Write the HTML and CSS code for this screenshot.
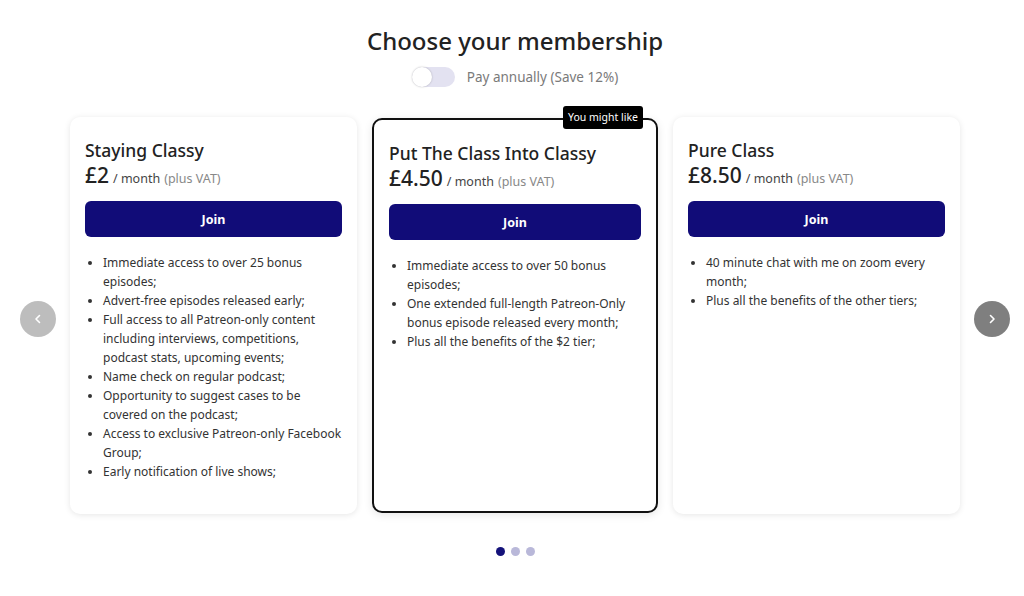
FILE: index.html
```html
<!DOCTYPE html>
<html lang="en">
<head>
<meta charset="utf-8">
<title>Choose your membership</title>
<link rel="stylesheet" href="styles.css">
</head>
<body>
<main class="page">
  <h1 class="title">Choose your membership</h1>
  <div class="toggle-row">
    <span class="switch"><span class="knob"></span></span>
    <span class="toggle-label">Pay annually (Save 12%)</span>
  </div>

  <div class="carousel">
    <button class="arrow arrow-prev" aria-label="Previous">
      <svg width="12" height="12" viewBox="0 0 12 12"><path d="M7.5 2.5 L4 6 L7.5 9.5" fill="none" stroke="#fff" stroke-width="1.6" stroke-linecap="round" stroke-linejoin="round"/></svg>
    </button>

    <div class="track">
      <section class="card">
        <h2 class="card-title">Staying Classy</h2>
        <div class="price"><span class="amount">£2</span><span class="per">/ month</span><span class="vat">(plus VAT)</span></div>
        <button class="join">Join</button>
        <ul class="perks">
          <li>Immediate access to over 25 bonus episodes;</li>
          <li>Advert-free episodes released early;</li>
          <li>Full access to all Patreon-only content including interviews, competitions, podcast stats, upcoming events;</li>
          <li>Name check on regular podcast;</li>
          <li>Opportunity to suggest cases to be covered on the podcast;</li>
          <li>Access to exclusive Patreon-only Facebook Group;</li>
          <li>Early notification of live shows;</li>
        </ul>
      </section>

      <section class="card card-featured">
        <span class="badge">You might like</span>
        <h2 class="card-title">Put The Class Into Classy</h2>
        <div class="price"><span class="amount">£4.50</span><span class="per">/ month</span><span class="vat">(plus VAT)</span></div>
        <button class="join">Join</button>
        <ul class="perks">
          <li>Immediate access to over 50 bonus episodes;</li>
          <li>One extended full-length Patreon-Only bonus episode released every month;</li>
          <li>Plus all the benefits of the $2 tier;</li>
        </ul>
      </section>

      <section class="card">
        <h2 class="card-title">Pure Class</h2>
        <div class="price"><span class="amount">£8.50</span><span class="per">/ month</span><span class="vat">(plus VAT)</span></div>
        <button class="join">Join</button>
        <ul class="perks">
          <li>40 minute chat with me on zoom every month;</li>
          <li>Plus all the benefits of the other tiers;</li>
        </ul>
      </section>
    </div>

    <button class="arrow arrow-next" aria-label="Next">
      <svg width="12" height="12" viewBox="0 0 12 12"><path d="M4.5 2.5 L8 6 L4.5 9.5" fill="none" stroke="#fff" stroke-width="1.6" stroke-linecap="round" stroke-linejoin="round"/></svg>
    </button>
  </div>

  <div class="dots">
    <span class="dot dot-active"></span>
    <span class="dot"></span>
    <span class="dot"></span>
  </div>
</main>
</body>
</html>
```

FILE: styles.css
```css
* { box-sizing: border-box; }

html, body {
  margin: 0;
  background: #ffffff;
}

body {
  font-family: "Noto Sans", "Open Sans", Arial, sans-serif;
  color: #222;
}

.page {
  padding-top: 23px;
  display: flex;
  flex-direction: column;
  align-items: center;
}

.title {
  margin: 0 0 0 6px;
  font-size: 24px;
  line-height: 36px;
  font-weight: 500;
  color: #222;
}

.toggle-row {
  margin-top: 8px;
  margin-left: 6px;
  display: flex;
  align-items: center;
  gap: 12px;
  height: 20px;
}

.switch {
  position: relative;
  width: 43px;
  height: 20px;
  border-radius: 10px;
  background: #e3e2f1;
}

.knob {
  position: absolute;
  left: 0;
  top: 0;
  width: 20px;
  height: 20px;
  border-radius: 50%;
  background: #fff;
  box-shadow: 0 0 2px rgba(0,0,0,0.25);
}

.toggle-label {
  font-size: 13.5px;
  color: #7a7a7a;
}

.carousel {
  align-self: stretch;
  margin-top: 30px;
  padding-left: 20px;
  display: flex;
  align-items: center;
  gap: 14px;
}

.arrow {
  flex: 0 0 36px;
  width: 36px;
  height: 36px;
  margin-top: 7px;
  border: none;
  border-radius: 50%;
  padding: 0;
  display: flex;
  align-items: center;
  justify-content: center;
  cursor: pointer;
}

.arrow-prev { background: #bdbdbd; }
.arrow-next { background: #7f7f7f; }

.track {
  display: flex;
  align-items: center;
  gap: 15px;
}

.card {
  position: relative;
  width: 287px;
  height: 397px;
  padding: 21px 15px 15px;
  background: #fff;
  border-radius: 10px;
  box-shadow: 0 1px 6px rgba(0,0,0,0.10);
}

.card-featured {
  width: 286px;
  height: 395px;
  border: 2px solid #111;
  box-shadow: 0 2px 8px rgba(0,0,0,0.10);
}

.badge {
  position: absolute;
  top: -14px;
  right: 13px;
  background: #000;
  color: #fff;
  font-size: 10.5px;
  line-height: 23px;
  padding: 0 5px;
  border-radius: 3px;
}

.card-title {
  margin: 0;
  height: 24px;
  font-size: 17.5px;
  line-height: 24px;
  font-weight: 500;
  color: #222;
}

.price {
  display: flex;
  align-items: baseline;
  gap: 4px;
  height: 26px;
  line-height: 26px;
  color: #222;
}

.amount {
  font-size: 21px;
  font-weight: 500;
}

.per {
  font-size: 12.5px;
  color: #444;
}

.vat {
  font-size: 12.5px;
  color: #888;
}

.join {
  display: block;
  width: 100%;
  height: 36px;
  margin-top: 13px;
  border: none;
  border-radius: 6px;
  background: #110c78;
  color: #fff;
  font-family: inherit;
  font-size: 12.5px;
  font-weight: 700;
  cursor: pointer;
}

.perks {
  margin: 16px 0 0;
  padding-left: 18px;
  font-size: 12px;
  line-height: 19px;
  color: #333;
}

.dots {
  margin-top: 33px;
  display: flex;
  gap: 6px;
  margin-left: 6px;
}

.dot {
  width: 9px;
  height: 9px;
  border-radius: 50%;
  background: #b9b8d9;
}

.dot-active { background: #14127a; }
```
